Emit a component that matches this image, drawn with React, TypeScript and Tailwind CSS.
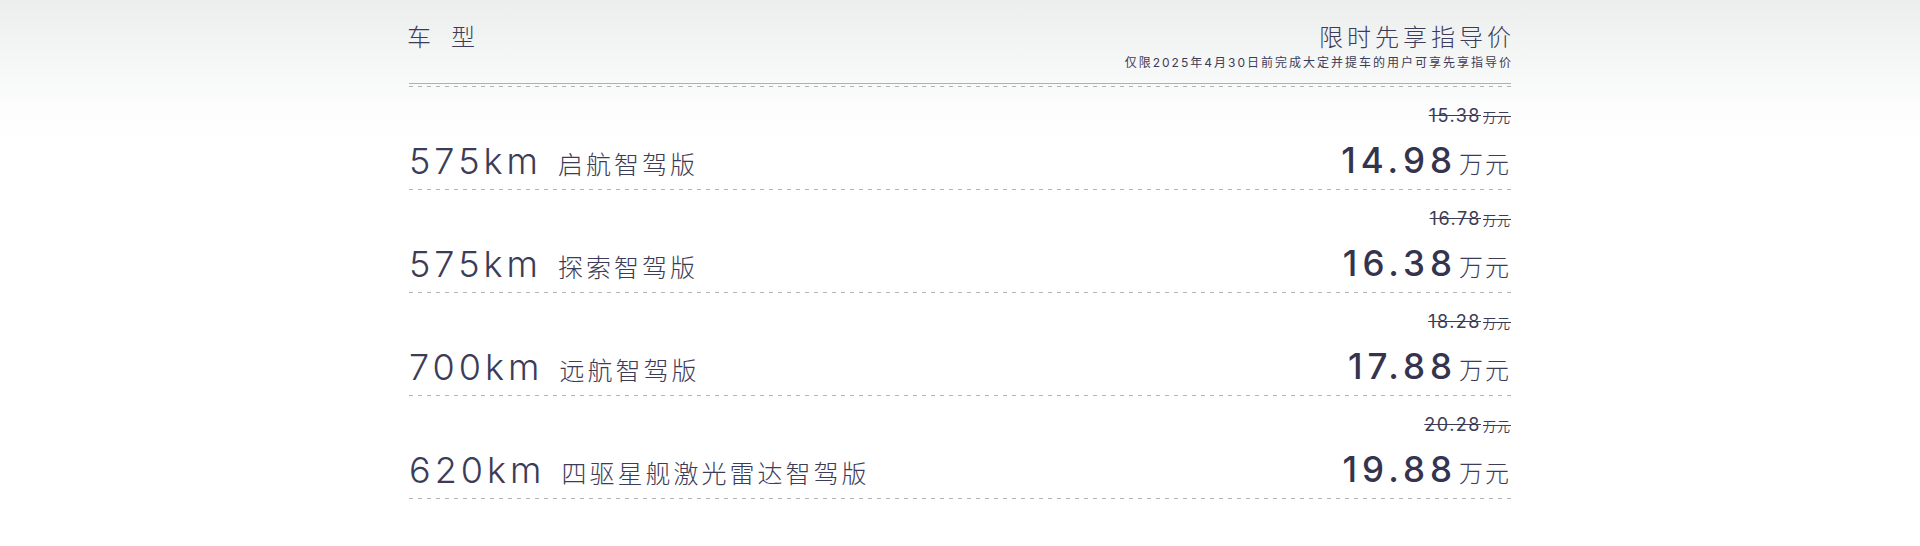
import React from "react";

type Trim = {
  range: string;
  name: string;
  was: string;
  now: string;
};

const trims: Trim[] = [
  { range: "575km", name: "启航智驾版", was: "15.38", now: "14.98" },
  { range: "575km", name: "探索智驾版", was: "16.78", now: "16.38" },
  { range: "700km", name: "远航智驾版", was: "18.28", now: "17.88" },
  { range: "620km", name: "四驱星舰激光雷达智驾版", was: "20.28", now: "19.88" },
];

const latin = "font-['Inter','Liberation_Sans',sans-serif]";
const cjk = "font-['Noto_Sans_CJK_SC','Noto_Sans',sans-serif]";

function Dashes() {
  return (
    <div className="h-px w-full bg-[linear-gradient(to_right,#b3b3bd_50%,transparent_50%)] bg-[length:9px_1px]" />
  );
}

function Row({ trim }: { trim: Trim }) {
  return (
    <>
      <div className="h-[102px] flex justify-between items-end pb-[6px]">
        <div className="flex items-baseline">
          <span className={`${latin} text-[36px] leading-[40px] font-light tracking-[4px] text-[#3d3c58]`}>
            {trim.range}
          </span>
          <span className={`${cjk} ml-[16px] text-[25px] leading-[40px] font-light tracking-[3px] text-[#3d3c58]`}>
            {trim.name}
          </span>
        </div>
        <div className="flex flex-col items-end">
          <div className="flex items-baseline line-through decoration-[#3d3c58] text-[#3d3c58] leading-[22px]">
            <span className={`${latin} text-[18px] tracking-[1.5px]`}>{trim.was}</span>
            <span className={`${cjk} ml-[2px] text-[13px] tracking-[1px]`}>万元</span>
          </div>
          <div className="mt-[12px] flex items-baseline leading-[40px]">
            <span className={`${latin} text-[35px] font-medium tracking-[5px] text-[#34344f]`}>
              {trim.now}
            </span>
            <span className={`${cjk} ml-[2px] text-[24px] font-light tracking-[2px] text-[#3d3c58]`}>
              万元
            </span>
          </div>
        </div>
      </div>
      <Dashes />
    </>
  );
}

export default function App() {
  return (
    <div className="min-h-screen w-full bg-[linear-gradient(to_bottom,#eceded_0px,#f5f6f6_60px,#fdfdfd_110px,#ffffff_150px)]">
      <div className="w-[1102px] mx-auto">
        <div className="h-[84px] flex justify-between items-start pt-[20px] border-b border-[#adaebe]">
          <div className={`${cjk} -ml-[2px] text-[24px] leading-[32px] font-light tracking-[20px] text-[#3d3c58]`}>
            车型
          </div>
          <div className="flex flex-col items-end">
            <div className={`${cjk} text-[24px] leading-[32px] font-light tracking-[4px] text-[#3d3c58] -mr-[4px]`}>
              限时先享指导价
            </div>
            <div className={`${cjk} mt-[2px] text-[12px] leading-[16px] tracking-[2px] text-[#3d3c58] -mr-[2px]`}>
              仅限<span className={latin}>2025</span>年<span className={latin}>4</span>月<span className={latin}>30</span>日前完成大定并提车的用户可享先享指导价
            </div>
          </div>
        </div>
        <div className="mt-[2px]">
          <Dashes />
        </div>
        {trims.map((t) => (
          <Row key={t.name} trim={t} />
        ))}
      </div>
    </div>
  );
}
